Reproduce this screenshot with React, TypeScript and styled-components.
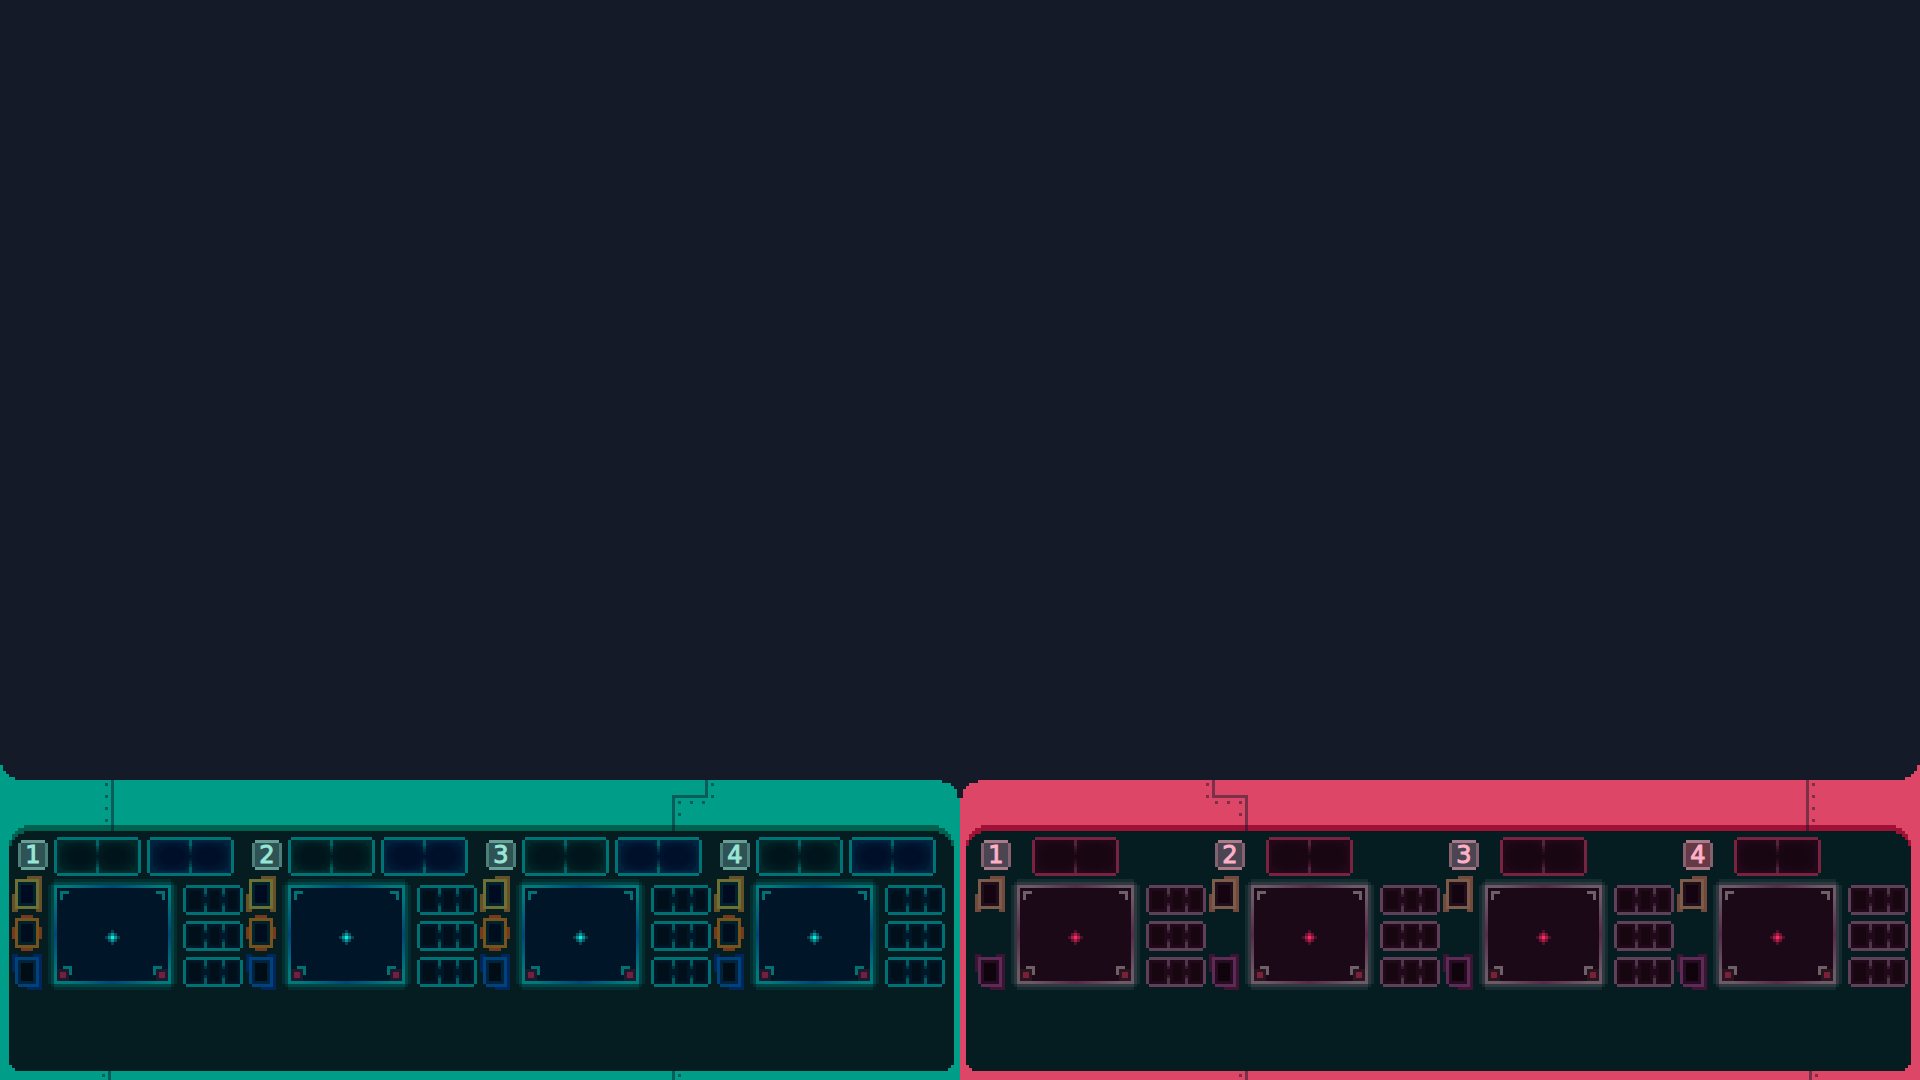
import React from "react";
import styled, { createGlobalStyle, ThemeProvider, useTheme } from "styled-components";

/* Everything is drawn on a 3px pixel-art grid. */
const PX = 3;

type IconTone = { ring: string; shade: string; inner: string; core: string };

interface SideTheme {
  mirrored: boolean;
  hull: string;
  rim: string;
  badgeRing: string;
  badgeRingEnd: string;
  badgeFill: string;
  badgeFillAlert: string;
  digit: string;
  slotEdge: string;
  slotDivider: string;
  slots: { fill: string; core: string }[];
  edge: string;
  edgeMid: string;
  glowNear: string;
  glowFar: string;
  screen: string;
  bracket: string;
  lampBase: string;
  lamp: string;
  star: [string, string, string, string];
  rackEdge: string;
  rackFill: string;
  rackCore: string;
  icons: (IconTone | null)[];
}

const verdant: SideTheme = {
  mirrored: false,
  hull: "#009e88",
  rim: "#00614f",
  badgeRing: "#659f96",
  badgeRingEnd: "#4d7f7a",
  badgeFill: "#2f5355",
  badgeFillAlert: "#2f5355",
  digit: "#98e6d6",
  slotEdge: "#007377",
  slotDivider: "#006466",
  slots: [
    { fill: "#002a2c", core: "#00151c" },
    { fill: "#00233e", core: "#000f2a" },
  ],
  edge: "#007a7c",
  edgeMid: "#004678",
  glowNear: "#024444",
  glowFar: "#032e31",
  screen: "#001527",
  bracket: "#007274",
  lampBase: "#1e1a2e",
  lamp: "#741f42",
  star: ["#04efe6", "#0a9196", "#0b505d", "#08414f"],
  rackEdge: "#007073",
  rackFill: "#001727",
  rackCore: "#000f1a",
  icons: [
    { ring: "#6d7034", shade: "#66502a", inner: "#00232b", core: "#000a20" },
    { ring: "#75521e", shade: "#733a1c", inner: "#00232b", core: "#000d1f" },
    { ring: "#00427c", shade: "#00265a", inner: "#002440", core: "#000d15" },
  ],
};

const crimson: SideTheme = {
  mirrored: true,
  hull: "#de4668",
  rim: "#a01235",
  badgeRing: "#ab7a89",
  badgeRingEnd: "#86606f",
  badgeFill: "#4b4552",
  badgeFillAlert: "#653a45",
  digit: "#ffb0c6",
  slotEdge: "#78233f",
  slotDivider: "#54243f",
  slots: [{ fill: "#220819", core: "#180612" }],
  edge: "#6d5a68",
  edgeMid: "#552b49",
  glowNear: "#30383f",
  glowFar: "#142b30",
  screen: "#1b0917",
  bracket: "#6f5f69",
  lampBase: "#28151d",
  lamp: "#7a2038",
  star: ["#ff2a62", "#a91c43", "#641330", "#4f1129"],
  rackEdge: "#5e4058",
  rackFill: "#200919",
  rackCore: "#17060f",
  icons: [
    { ring: "#7b5b4a", shade: "#73493e", inner: "#200e1a", core: "#140411" },
    null,
    { ring: "#5e2b56", shade: "#3c1434", inner: "#250c22", core: "#10040c" },
  ],
};

const GlobalStyle = createGlobalStyle`
  *, *::before, *::after { box-sizing: border-box; }
  body { margin: 0; background: #141a27; }
`;

/* Stepped outline shared by the rim and the console inside it. */
const steppedPanel = `polygon(
  15px 0, calc(100% - 15px) 0, calc(100% - 15px) 3px, calc(100% - 9px) 3px,
  calc(100% - 9px) 6px, calc(100% - 6px) 6px, calc(100% - 6px) 9px,
  calc(100% - 3px) 9px, calc(100% - 3px) 15px, 100% 15px,
  100% calc(100% - 6px), calc(100% - 3px) calc(100% - 6px),
  calc(100% - 3px) calc(100% - 3px), calc(100% - 6px) calc(100% - 3px),
  calc(100% - 6px) 100%, 6px 100%, 6px calc(100% - 3px),
  3px calc(100% - 3px), 3px calc(100% - 6px), 0 calc(100% - 6px),
  0 15px, 3px 15px, 3px 9px, 6px 9px, 6px 6px, 9px 6px, 9px 3px, 15px 3px)`;

const Page = styled.div`
  display: flex;
  flex-direction: column;
  min-height: 100vh;
  background: linear-gradient(to right, ${verdant.hull} 50%, ${crimson.hull} 50%);
`;

const Stage = styled.main`
  flex: 1;
  background: #141a27;
  clip-path: polygon(
    0 0, 100% 0, 100% calc(100% - 15px), calc(100% - 3px) calc(100% - 15px),
    calc(100% - 3px) calc(100% - 9px), calc(100% - 6px) calc(100% - 9px),
    calc(100% - 6px) calc(100% - 6px), calc(100% - 9px) calc(100% - 6px),
    calc(100% - 9px) calc(100% - 3px), calc(100% - 15px) calc(100% - 3px),
    calc(100% - 15px) 100%, 15px 100%, 15px calc(100% - 3px),
    9px calc(100% - 3px), 9px calc(100% - 6px), 6px calc(100% - 6px),
    6px calc(100% - 9px), 3px calc(100% - 9px), 3px calc(100% - 15px),
    0 calc(100% - 15px));
`;

const Deck = styled.footer`
  display: grid;
  grid-template-columns: 1fr 1fr;
`;

const Hull = styled.section`
  position: relative;
  padding: ${({ theme }) => (theme.mirrored ? "45px 9px 9px 6px" : "45px 6px 9px 9px")};
  background: ${({ theme }) => theme.hull};
`;

const Rim = styled.div`
  padding-top: 6px;
  background: ${({ theme }) => theme.rim};
  clip-path: ${steppedPanel};
`;

const Console = styled.div`
  display: grid;
  grid-template-columns: repeat(4, minmax(234px, 1fr));
  min-height: 240px;
  padding: ${({ theme }) => (theme.mirrored ? "6px 3px 0 6px" : "6px 9px 0 0")};
  background: #051c21;
  clip-path: ${steppedPanel};
`;

const Seam = styled.svg<{ $x: number; $foot?: boolean }>`
  position: absolute;
  ${({ $foot }) => ($foot ? "bottom: 0;" : "top: 0;")}
  ${({ theme, $x }) => `${theme.mirrored ? "right" : "left"}: ${$x}px;`}
  ${({ theme }) => theme.mirrored && "transform: scaleX(-1);"}
  fill: rgba(20, 26, 39, 0.5);
`;

const Notch = styled.svg`
  position: absolute;
  top: 0;
  ${({ theme }) => (theme.mirrored ? "left: 0; transform: scaleX(-1);" : "right: 0;")}
  fill: #141a27;
`;

const Module = styled.article`
  display: flex;
  flex-direction: column;
`;

const Header = styled.header`
  display: flex;
  align-items: center;
  gap: 6px;
  height: 39px;
  padding-left: 9px;
`;

const Slots = styled.div`
  display: flex;
  gap: 6px;
  padding-left: ${({ theme }) => (theme.mirrored ? 15 : 0)}px;
`;

const Badge = styled.span<{ $alert: boolean }>`
  display: flex;
  align-items: center;
  justify-content: center;
  width: 30px;
  height: 30px;
  margin-top: -3px;
  border: 3px solid ${({ theme }) => theme.badgeRing};
  border-left-color: ${({ theme }) => theme.badgeRingEnd};
  border-right-color: ${({ theme }) => theme.badgeRingEnd};
  background: ${({ theme, $alert }) => ($alert ? theme.badgeFillAlert : theme.badgeFill)};
  color: ${({ theme }) => theme.digit};
  font: 24px/24px "DejaVu Sans", sans-serif;
  -webkit-text-stroke: 1px currentColor;
  clip-path: polygon(
    3px 0, 27px 0, 27px 3px, 30px 3px, 30px 27px, 27px 27px,
    27px 30px, 3px 30px, 3px 27px, 0 27px, 0 3px, 3px 3px);
`;

const Body = styled.div`
  display: flex;
  gap: 12px;
  padding-left: 3px;
`;

const IconColumn = styled.div`
  display: grid;
  grid-template-rows: repeat(3, 36px);
  gap: 3px;
  width: 30px;
`;

const RackColumn = styled.div`
  display: flex;
  flex-direction: column;
  gap: 6px;
  padding-top: 9px;
`;

const ScreenBay = styled.div`
  padding-top: 9px;
`;

const Sprite = styled.svg`
  display: block;
  overflow: visible;
  shape-rendering: crispEdges;
`;

type R = [number, number, number, number];
const Cells = ({ fill, at, opacity }: { fill: string; at: R[]; opacity?: number }) => (
  <g fill={fill} opacity={opacity}>
    {at.map(([x, y, w, h], i) => (
      <rect key={i} x={x} y={y} width={w} height={h} />
    ))}
  </g>
);

function SlotArt({ fill, core }: { fill: string; core: string }) {
  const t = useTheme() as SideTheme;
  const id = `slot-${core.slice(1)}`;
  return (
    <Sprite width={29 * PX} height={13 * PX} viewBox="0 0 29 13">
      <defs>
        <radialGradient id={id}>
          <stop offset="0.45" stopColor={core} />
          <stop offset="1" stopColor={core} stopOpacity="0" />
        </radialGradient>
      </defs>
      <Cells fill={fill} at={[[1, 1, 27, 11]]} />
      <Cells fill={`url(#${id})`} at={[[1, 1, 15, 11], [13, 1, 15, 11]]} />
      <Cells fill={core} opacity={0.4} at={[[2, 3, 25, 7], [3, 2, 10, 9], [16, 2, 10, 9]]} />
      <Cells fill={t.slotEdge} at={[[1, 0, 27, 1], [1, 12, 27, 1], [0, 1, 1, 11], [28, 1, 1, 11]]} />
      <Cells fill={t.slotDivider} at={[[14, 1, 1, 2], [14, 10, 1, 2]]} />
      <Cells fill={t.slotDivider} opacity={0.6} at={[[14, 3, 1, 1], [14, 9, 1, 1]]} />
      <Cells fill={t.slotDivider} opacity={0.35} at={[[14, 4, 1, 1], [14, 8, 1, 1]]} />
      <Cells fill={t.slotDivider} opacity={0.15} at={[[14, 5, 1, 1], [14, 7, 1, 1]]} />
    </Sprite>
  );
}

function ScreenArt() {
  const t = useTheme() as SideTheme;
  const id = t.mirrored ? "crimson" : "verdant";
  const stops = (
    <>
      <stop offset="0.12" stopColor={t.edge} />
      <stop offset="0.5" stopColor={t.edgeMid} />
      <stop offset="0.88" stopColor={t.edge} />
    </>
  );
  return (
    <Sprite width={39 * PX} height={33 * PX} viewBox="0 0 39 33">
      <defs>
        <linearGradient id={`${id}-h`} gradientUnits="userSpaceOnUse" x1="0" x2="39">{stops}</linearGradient>
        <linearGradient id={`${id}-v`} gradientUnits="userSpaceOnUse" x1="0" x2="0" y1="0" y2="33">{stops}</linearGradient>
      </defs>
      <Cells fill={t.glowFar} at={[[0, -2, 39, 37], [-2, 0, 43, 33], [-1, -1, 41, 35]]} />
      <Cells fill={t.glowNear} at={[[0, -1, 39, 35], [-1, 0, 41, 33]]} />
      <Cells fill={t.screen} at={[[1, 1, 37, 31]]} />
      <Cells fill={`url(#${id}-h)`} at={[[0, 0, 39, 1], [0, 32, 39, 1]]} />
      <Cells fill={`url(#${id}-v)`} at={[[0, 0, 1, 33], [38, 0, 1, 33]]} />
      <Cells
        fill={t.bracket}
        at={[
          [2, 2, 3, 1], [2, 3, 1, 2], [34, 2, 3, 1], [36, 3, 1, 2],
          [3, 27, 3, 1], [5, 28, 1, 2], [33, 27, 3, 1], [33, 28, 1, 2],
        ]}
      />
      <Cells fill={t.lampBase} at={[[1, 28, 4, 4], [34, 28, 4, 4]]} />
      <Cells fill={t.lamp} at={[[2, 29, 2, 2], [35, 29, 2, 2]]} />
      <Cells fill={t.star[3]} at={[[17, 17, 1, 1], [21, 17, 1, 1], [19, 15, 1, 1], [19, 19, 1, 1]]} />
      <Cells fill={t.star[2]} at={[[18, 16, 3, 3]]} />
      <Cells fill={t.star[1]} at={[[18, 17, 3, 1], [19, 16, 1, 3]]} />
      <Cells fill={t.star[0]} at={[[19, 17, 1, 1]]} />
    </Sprite>
  );
}

function RackArt() {
  const t = useTheme() as SideTheme;
  return (
    <Sprite width={20 * PX} height={10 * PX} viewBox="0 0 20 10">
      <Cells fill={t.rackFill} at={[[1, 1, 18, 8]]} />
      <Cells fill={t.rackCore} at={[[2, 2, 4, 6], [9, 2, 3, 6], [15, 2, 3, 6]]} />
      <Cells fill={t.rackEdge} at={[[1, 0, 18, 1], [1, 9, 18, 1], [0, 1, 1, 8], [19, 1, 1, 8]]} />
      <Cells fill={t.rackEdge} opacity={0.8} at={[[7, 1, 1, 2], [13, 1, 1, 2], [7, 7, 1, 2], [13, 7, 1, 2]]} />
      <Cells fill={t.rackEdge} opacity={0.35} at={[[7, 3, 1, 1], [13, 3, 1, 1], [7, 6, 1, 1], [13, 6, 1, 1]]} />
    </Sprite>
  );
}

const iconShade: R[][] = [
  [[5, 0, 5, 1], [9, 1, 1, 11], [8, 11, 1, 1], [0, 6, 1, 6], [1, 11, 1, 1]],
  [[3, 0, 4, 1], [3, 11, 4, 1], [0, 4, 1, 4], [9, 4, 1, 4]],
  [[0, 0, 2, 1], [0, 1, 1, 5], [7, 0, 3, 1], [9, 1, 1, 11], [5, 11, 4, 1]],
];

function IconArt({ tone, kind }: { tone: IconTone; kind: number }) {
  return (
    <Sprite width={10 * PX} height={12 * PX} viewBox="0 0 10 12">
      <Cells fill={tone.shade} at={iconShade[kind]} />
      <Cells fill={tone.ring} at={kind === 2 ? [[1, 1, 8, 9], [2, 10, 7, 1]] : [[1, 1, 8, 10]]} />
      <Cells fill={tone.inner} at={[[2, 2, 6, 8]]} />
      <Cells fill={tone.core} at={[[3, 3, 4, 6]]} />
    </Sprite>
  );
}

function UnitModule({ index }: { index: number }) {
  const t = useTheme() as SideTheme;
  return (
    <Module>
      <Header>
        <Badge $alert={index === 4}>{index}</Badge>
        <Slots>
          {t.slots.map((s) => (
            <SlotArt key={s.fill} {...s} />
          ))}
        </Slots>
      </Header>
      <Body>
        <IconColumn>
          {t.icons.map((tone, i) => (tone ? <IconArt key={i} tone={tone} kind={i} /> : <span key={i} />))}
        </IconColumn>
        <ScreenBay>
          <ScreenArt />
        </ScreenBay>
        <RackColumn>
          <RackArt />
          <RackArt />
          <RackArt />
        </RackColumn>
      </Body>
    </Module>
  );
}

function Side({ theme }: { theme: SideTheme }) {
  return (
    <ThemeProvider theme={theme}>
      <Hull>
        <Rim>
          <Console>
            {[1, 2, 3, 4].map((n) => (
              <UnitModule key={n} index={n} />
            ))}
          </Console>
        </Rim>
        <Seam $x={105} width="9" height="51">
          <path d="M6 0h3v51h-3z M0 3h3v3h-3z M0 15h3v3h-3z M0 27h3v3h-3z M0 39h3v3h-3z" />
        </Seam>
        <Seam $x={672} width="42" height="51">
          <path d="M33 0h3v18h-33v33h-3v-36h33z M39 3h3v3h-3z M39 15h3v3h-3z M6 21h3v3h-3z M18 21h3v3h-3z M30 21h3v3h-3z M6 33h3v3h-3z" />
        </Seam>
        <Seam $x={102} $foot width="9" height="9">
          <path d="M6 0h3v9h-3z M0 3h3v3h-3z" />
        </Seam>
        <Seam $x={672} $foot width="9" height="9">
          <path d="M0 0h3v9h-3z M6 3h3v3h-3z" />
        </Seam>
        <Notch width="18" height="18">
          <path d="M0 0h18v18h-3v-9h-3v-3h-3v-3h-9z" />
        </Notch>
      </Hull>
    </ThemeProvider>
  );
}

export default function App() {
  return (
    <Page>
      <GlobalStyle />
      <Stage />
      <Deck>
        <Side theme={verdant} />
        <Side theme={crimson} />
      </Deck>
    </Page>
  );
}
